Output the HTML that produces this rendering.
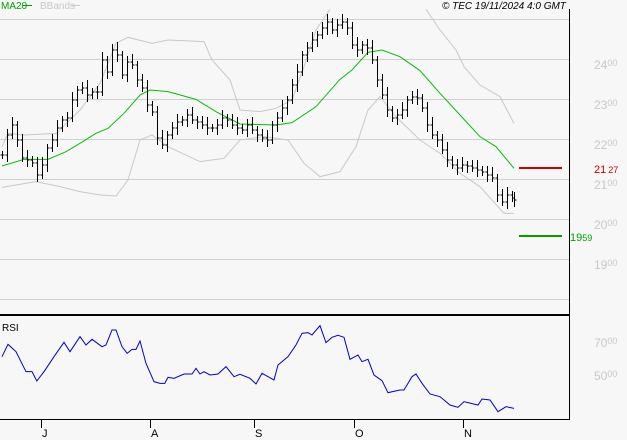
<!DOCTYPE html>
<html><head><meta charset="utf-8"><style>
html,body{margin:0;padding:0;background:#f7f7f7;}
svg{display:block;font-family:"Liberation Sans",sans-serif;}
</style></head><body>
<svg id="s" width="627" height="440" viewBox="0 0 627 440" xmlns="http://www.w3.org/2000/svg">
<rect width="627" height="440" fill="#f7f7f7"/>
<g stroke="#cfcfcf" stroke-width="1">
<line x1="0" y1="19.5" x2="569" y2="19.5"/><line x1="0" y1="59.5" x2="569" y2="59.5"/>
<line x1="0" y1="99.5" x2="569" y2="99.5"/><line x1="0" y1="139.5" x2="569" y2="139.5"/>
<line x1="0" y1="179.5" x2="569" y2="179.5"/><line x1="0" y1="219.5" x2="569" y2="219.5"/>
<line x1="0" y1="259.5" x2="569" y2="259.5"/><line x1="0" y1="299.5" x2="569" y2="299.5"/>
</g>
<line x1="569.5" y1="9" x2="569.5" y2="420" stroke="#000"/>
<line x1="0" y1="315" x2="570" y2="315" stroke="#000" stroke-width="2"/>
<line x1="0" y1="419.5" x2="570" y2="419.5" stroke="#000"/>
<g stroke="#000"><line x1="41.5" y1="419" x2="41.5" y2="428"/><line x1="150.5" y1="419" x2="150.5" y2="428"/><line x1="254.5" y1="419" x2="254.5" y2="428"/><line x1="354.5" y1="419" x2="354.5" y2="428"/><line x1="463.5" y1="419" x2="463.5" y2="428"/></g>
<g font-size="11" fill="#000"><text x="42" y="437">J</text><text x="151" y="437">A</text><text x="255" y="437">S</text><text x="355" y="437">O</text><text x="464" y="437">N</text></g>
<text x="1" y="9" font-size="10" fill="#00a000">MA20</text><line x1="23" y1="5.5" x2="32" y2="5.5" stroke="#00a000"/>
<text x="40" y="9" font-size="10" fill="#c8c8c8">BBands</text><line x1="72" y1="5.5" x2="80" y2="5.5" stroke="#c8c8c8"/>
<text x="442" y="9" font-size="10" font-style="italic" fill="#000">© TEC 19/11/2024 4:0 GMT</text>
<g font-size="12" fill="#c8c8c8">
<text x="594" y="69">24<tspan font-size="9" dy="-3">00</tspan></text>
<text x="594" y="109">23<tspan font-size="9" dy="-3">00</tspan></text>
<text x="594" y="149">22<tspan font-size="9" dy="-3">00</tspan></text>
<text x="594" y="189">21<tspan font-size="9" dy="-3">00</tspan></text>
<text x="594" y="229">20<tspan font-size="9" dy="-3">00</tspan></text>
<text x="594" y="269">19<tspan font-size="9" dy="-3">00</tspan></text>
<text x="594" y="347">70<tspan font-size="9" dy="-3">00</tspan></text>
<text x="594" y="380">50<tspan font-size="9" dy="-3">00</tspan></text>
</g>
<line x1="519" y1="168" x2="562" y2="168" stroke="#cc0000" stroke-width="2"/>
<text x="594" y="173" font-size="11" fill="#cc0000">21<tspan font-size="9" dx="2">27</tspan></text>
<line x1="519" y1="236" x2="562" y2="236" stroke="#00a000" stroke-width="2"/>
<text x="570" y="241" font-size="11" fill="#00a000">19<tspan font-size="9">59</tspan></text>
<text x="2" y="331" font-size="10" fill="#000">RSI</text>
<g transform="scale(0.4,0.33333)" fill="none">
<polyline vector-effect="non-scaling-stroke" stroke="#c8c8c8" points="5,440 20,400 60,405 140,400 200,330 250,250 290,130 320,112 380,130 420,120 510,125 530,180 575,240 600,330 650,335 690,325 730,300 760,200 790,90 825,28"/>
<polyline vector-effect="non-scaling-stroke" stroke="#c8c8c8" points="1065,28 1100,90 1140,150 1160,200 1200,255 1250,290 1285,370"/>
<polyline vector-effect="non-scaling-stroke" stroke="#c8c8c8" points="5,562 90,545 150,560 200,575 250,585 290,588 320,540 350,420 380,405 420,440 500,485 560,475 600,420 660,410 720,420 760,490 800,530 850,515 890,440 920,330 950,290 990,350 1050,420 1100,460 1150,520 1200,560 1260,640 1285,640"/>
<polyline vector-effect="non-scaling-stroke" stroke="#00c000" points="5,498 60,478 120,478 165,455 200,430 240,400 270,385 310,340 350,285 375,270 420,275 490,298 540,335 600,372 690,375 730,368 790,320 850,238 880,210 920,157 955,150 1000,170 1050,212 1100,280 1150,345 1200,410 1240,440 1285,505"/>
<polyline vector-effect="non-scaling-stroke" stroke="#0000cc" transform="translate(0,660)" points="5,410 20,373 40,395 65,455 80,455 92,483 110,455 135,410 160,367 175,395 200,350 215,375 230,358 255,380 265,375 280,330 290,330 305,380 318,400 330,388 340,388 350,363 365,430 385,485 400,490 412,490 420,472 435,475 460,462 480,462 490,445 500,462 510,455 525,465 545,462 565,440 585,470 600,463 625,475 640,492 655,460 670,470 685,480 695,435 720,410 740,375 755,340 770,338 780,345 800,317 815,368 830,352 845,346 860,352 875,418 895,405 905,425 920,418 935,465 955,482 970,518 1000,510 1010,510 1030,470 1040,462 1055,490 1075,522 1100,530 1125,555 1145,562 1160,545 1195,555 1205,537 1225,540 1245,575 1265,560 1285,565"/>
</g>
<g id="bars" stroke="#000" stroke-width="1"></g>
</svg>
<script>
var c=[[2,155],[7,135],[12,125],[17,140],[22,158],[27,160],[32,163],[37,175],[42,165],[47,148],[52,140],[57,128],[62,120],[67,118],[72,100],[77,90],[82,88],[87,95],[92,92],[97,92],[102,60],[107,72],[112,50],[117,55],[122,75],[127,62],[132,65],[137,80],[142,88],[147,105],[152,112],[157,138],[162,145],[167,135],[172,128],[177,122],[182,120],[187,115],[192,120],[197,122],[202,125],[207,128],[212,128],[217,125],[222,118],[227,120],[232,125],[237,128],[242,130],[247,125],[252,130],[257,135],[262,138],[267,140],[272,125],[277,118],[282,108],[287,100],[292,85],[297,72],[302,55],[307,48],[312,40],[317,35],[322,28],[327,22],[332,30],[337,25],[342,22],[347,28],[352,45],[357,50],[362,45],[367,48],[372,60],[377,80],[382,95],[387,110],[392,118],[397,115],[402,110],[407,100],[412,97],[417,98],[422,108],[427,125],[432,135],[437,140],[442,150],[447,160],[452,165],[457,168],[462,165],[467,166],[472,168],[477,170],[482,172],[487,175],[492,178],[497,195],[502,202],[507,195],[512,198],[514,200]];
var g=document.getElementById('bars'),h='';
for(var i=0;i<c.length;i++){var x=c[i][0]+0.5,y=c[i][1],p=i?c[i-1][1]:y;var hi=Math.min(y,p)-4-(i%3)*2,lo=Math.max(y,p)+4+(i%2)*3;
h+='<line x1="'+x+'" y1="'+hi+'" x2="'+x+'" y2="'+lo+'"/><line x1="'+(x-2)+'" y1="'+p+'" x2="'+x+'" y2="'+p+'"/><line x1="'+x+'" y1="'+y+'" x2="'+(x+2)+'" y2="'+y+'"/>';}
g.innerHTML=h;
</script>
</body></html>
